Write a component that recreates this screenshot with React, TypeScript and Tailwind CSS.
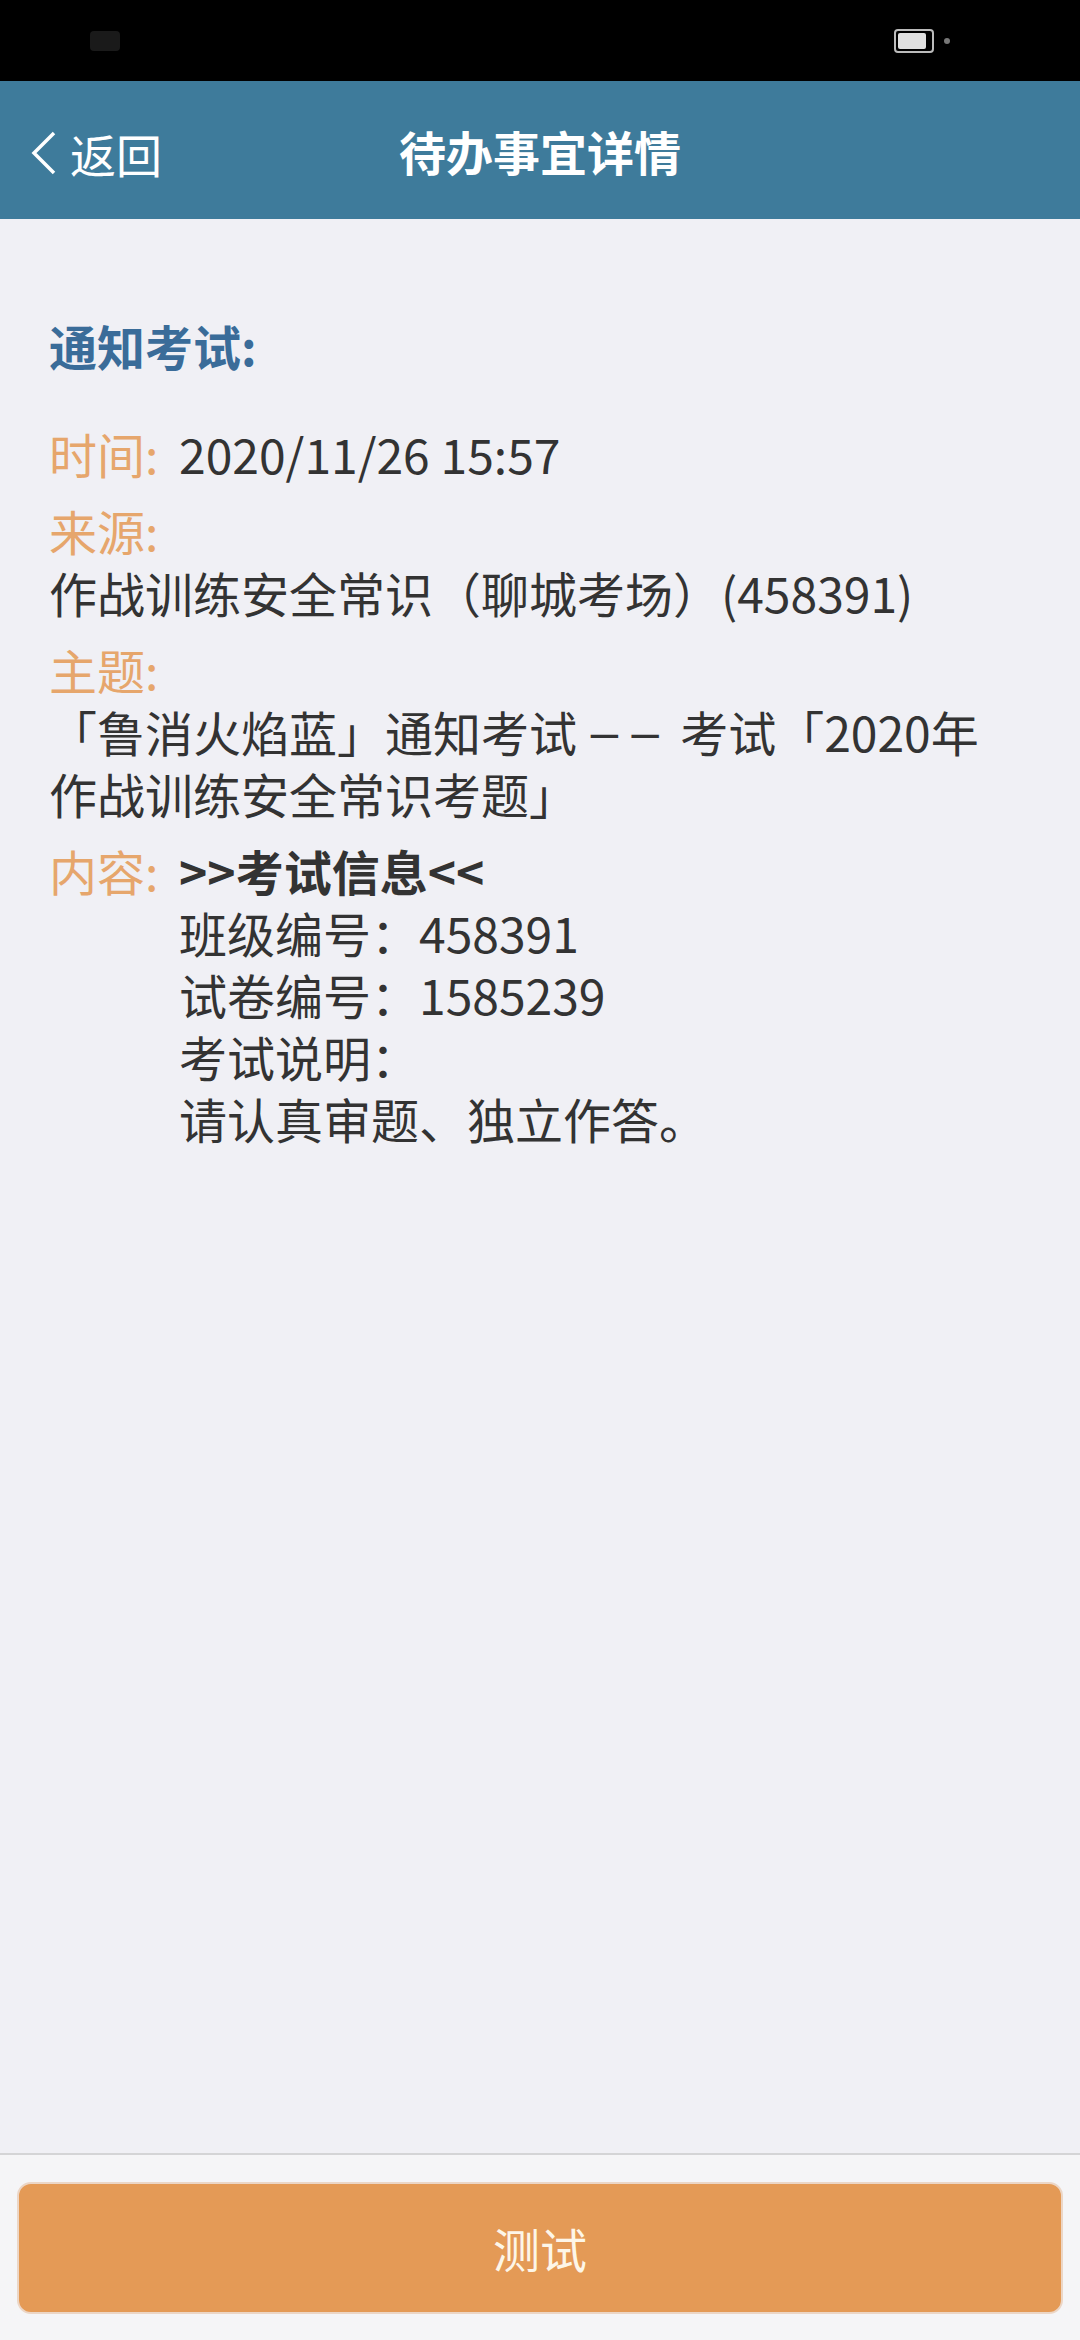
export default function App() {
  const font = { fontFamily: '"Noto Sans CJK SC", "Noto Sans", sans-serif' };

  return (
    <div className="flex h-[2340px] w-[1080px] flex-col bg-[#f0f0f5]" style={font}>
      {/* Status bar */}
      <div className="flex h-[81px] items-center justify-between bg-black px-[90px]">
        <div className="h-[20px] w-[30px] rounded-sm bg-[#1a1a1a]" />
        <div className="flex items-center gap-[10px] pr-[40px]">
          <div className="flex h-[24px] w-[40px] items-center rounded-[4px] border-2 border-[#bbbbbb] p-[2px]">
            <div className="h-full w-[28px] rounded-[2px] bg-[#e0e0e0]" />
          </div>
          <div className="h-[6px] w-[6px] rounded-full bg-[#777777]" />
        </div>
      </div>

      {/* Header */}
      <div className="relative flex h-[138px] items-center justify-center bg-[#3e7b9b]">
        <div className="absolute left-[30px] top-0 flex h-full items-center gap-[12px] pt-[6px]">
          <svg width="28" height="44" viewBox="0 0 28 44" fill="none">
            <polyline points="24,2 4,22 24,42" stroke="#ffffff" strokeWidth="3.5" strokeLinejoin="miter" />
          </svg>
          <span className="text-[46px] leading-none text-white">返回</span>
        </div>
        <span className="text-[47px] font-bold leading-none text-white">待办事宜详情</span>
      </div>

      {/* Content */}
      <div className="flex-1 px-[49px] pt-[95px]">
        <h2 className="text-[48px] font-bold leading-[62px] text-[#3a6c99]">通知考试:</h2>

        <div className="mt-[46px] flex flex-col gap-[15px] text-[48px] leading-[62px] text-[#333333]">
          <div className="flex">
            <span className="w-[130px] shrink-0 text-[#e6a66c]">时间:</span>
            <span>2020/11/26 15:57</span>
          </div>

          <div>
            <div className="text-[#e6a66c]">来源:</div>
            <div>作战训练安全常识（聊城考场）(458391)</div>
          </div>

          <div>
            <div className="text-[#e6a66c]">主题:</div>
            <div>
              「鲁消火焰蓝」通知考试{' '}
              <span className="text-[42px] leading-none tracking-[8px]" style={{ fontFamily: 'Roboto, sans-serif' }}>——</span>
              {' '}考试「2020年
              <br />
              作战训练安全常识考题」
            </div>
          </div>

          <div className="flex">
            <span className="w-[130px] shrink-0 text-[#e6a66c]">内容:</span>
            <div className="flex flex-col">
              <span className="font-bold">&gt;&gt;考试信息&lt;&lt;</span>
              <span>班级编号：458391</span>
              <span>试卷编号：1585239</span>
              <span>考试说明：</span>
              <span>请认真审题、独立作答。</span>
            </div>
          </div>
        </div>
      </div>

      {/* Bottom bar */}
      <div className="h-[187px] border-t-2 border-[#d4d4d6] bg-[#f5f5f7] px-[17px] pt-[27px]">
        <button className="flex h-[132px] w-full items-center justify-center rounded-[14px] border-2 border-[#ecd6c6] bg-[#e49a56] text-[47px] text-[#fdf6e8]">
          测试
        </button>
      </div>
    </div>
  );
}
